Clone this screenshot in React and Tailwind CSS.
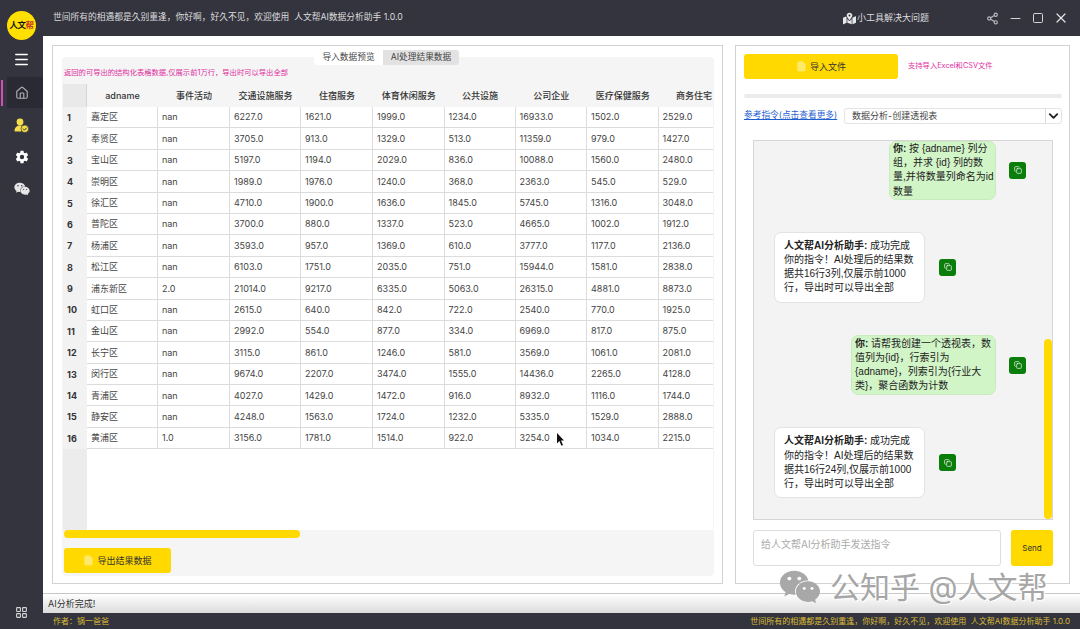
import React from "react";
import { Copy, File, LayoutGrid, ChevronDown, Minus, Square, X, Share2, Home, Menu } from "lucide-react";
import { FaMapMarkedAlt, FaWeixin } from "react-icons/fa";
import { IoSettingsSharp } from "react-icons/io5";

const FONT = "font-['Inter','Noto_Sans_CJK_SC',sans-serif]";
const CHAT_FONT = "font-['Liberation_Sans','Noto_Sans_CJK_SC',sans-serif]";

const COLS = [
  ["adname", "w-[71px]"],
  ["事件活动", "w-[72px]"],
  ["交通设施服务", "w-[71px]"],
  ["住宿服务", "w-[72px]"],
  ["体育休闲服务", "w-[71.5px]"],
  ["公共设施", "w-[71px]"],
  ["公司企业", "w-[71.5px]"],
  ["医疗保健服务", "w-[71.5px]"],
  ["商务住宅", "w-[71px]"],
];

const ROWS = [
  ["嘉定区", "nan", "6227.0", "1621.0", "1999.0", "1234.0", "16933.0", "1502.0", "2529.0"],
  ["奉贤区", "nan", "3705.0", "913.0", "1329.0", "513.0", "11359.0", "979.0", "1427.0"],
  ["宝山区", "nan", "5197.0", "1194.0", "2029.0", "836.0", "10088.0", "1560.0", "2480.0"],
  ["崇明区", "nan", "1989.0", "1976.0", "1240.0", "368.0", "2363.0", "545.0", "529.0"],
  ["徐汇区", "nan", "4710.0", "1900.0", "1636.0", "1845.0", "5745.0", "1316.0", "3048.0"],
  ["普陀区", "nan", "3700.0", "880.0", "1337.0", "523.0", "4665.0", "1002.0", "1912.0"],
  ["杨浦区", "nan", "3593.0", "957.0", "1369.0", "610.0", "3777.0", "1177.0", "2136.0"],
  ["松江区", "nan", "6103.0", "1751.0", "2035.0", "751.0", "15944.0", "1581.0", "2838.0"],
  ["浦东新区", "2.0", "21014.0", "9217.0", "6335.0", "5063.0", "26315.0", "4881.0", "8873.0"],
  ["虹口区", "nan", "2615.0", "640.0", "842.0", "722.0", "2540.0", "770.0", "1925.0"],
  ["金山区", "nan", "2992.0", "554.0", "877.0", "334.0", "6969.0", "817.0", "875.0"],
  ["长宁区", "nan", "3115.0", "861.0", "1246.0", "581.0", "3569.0", "1061.0", "2081.0"],
  ["闵行区", "nan", "9674.0", "2207.0", "3474.0", "1555.0", "14436.0", "2265.0", "4128.0"],
  ["青浦区", "nan", "4027.0", "1429.0", "1472.0", "916.0", "8932.0", "1116.0", "1744.0"],
  ["静安区", "nan", "4248.0", "1563.0", "1724.0", "1232.0", "5335.0", "1529.0", "2888.0"],
  ["黄浦区", "1.0", "3156.0", "1781.0", "1514.0", "922.0", "3254.0", "1034.0", "2215.0"],
];

const Sidebar = () => (
  <aside className="w-[43px] shrink-0 bg-[#34343f] flex flex-col items-center">
    <div className="mt-[11px] w-[29px] h-[29px] rounded-full bg-[#ffe000] flex items-center justify-center text-[8.5px] font-bold text-[#111] whitespace-nowrap tracking-[-0.5px]">
      人文<span className="text-[#c8352b]">帮</span>
    </div>
    <Menu size={17} strokeWidth={2.2} className="mt-[11px] text-white" />
    <div className="relative mt-[9px] w-full h-[31px]">
      <span className="absolute left-[1px] top-[3px] w-[2px] h-[26px] bg-[#d04fb0]" />
      <div className="ml-[7px] h-full bg-[#2a2a34] flex items-center justify-center pr-[6px]">
        <Home size={14} className="text-[#a9a9b0]" />
      </div>
    </div>
    <svg width="15" height="15" viewBox="0 0 15 15" className="mt-[10px]">
      <circle cx="6" cy="4" r="3.4" fill="#f5dc4a" />
      <path d="M0.5 13c0-3.8 2.4-5.6 5.5-5.6 2 0 3.6.7 4.6 2.1L7 13.6H1z" fill="#f5dc4a" />
      <circle cx="10.8" cy="10.8" r="3.8" fill="#f5dc4a" stroke="#34343f" strokeWidth="0.7" />
      <path d="M9 10.6l1.5 1.6 2-2.4" fill="none" stroke="#34343f" strokeWidth="1" />
    </svg>
    <IoSettingsSharp size={14} className="mt-[17px] text-white" />
    <FaWeixin size={16} className="mt-[17px] text-[#e6e6e6]" />
    <LayoutGrid size={13} strokeWidth={2} className="mt-auto mb-[10px] text-[#d5d5d5]" />
  </aside>
);

const WinBtn = ({ children }) => (
  <span className="w-[23px] flex items-center justify-center">{children}</span>
);

const TitleBar = () => (
  <header className="h-[36px] shrink-0 bg-[#34343f] flex items-center pl-[10px] pr-[7.5px] text-[#dcdcdc] text-[8.75px]">
    <span className="whitespace-pre">世间所有的相遇都是久别重逢，你好啊，好久不见，欢迎使用  人文帮AI数据分析助手 1.0.0</span>
    <div className="ml-auto flex items-center gap-[1px]">
      <FaMapMarkedAlt size={13} className="text-[#e8e8e8]" />
      <span className="text-[9px]">小工具解决大问题</span>
    </div>
    <div className="ml-[51.5px] flex">
      <WinBtn><Share2 size={13} className="text-[#bcbcc2]" /></WinBtn>
      <WinBtn><Minus size={15} strokeWidth={1.8} className="text-[#d5d5d5]" /></WinBtn>
      <WinBtn><Square size={12} strokeWidth={2} className="text-[#d5d5d5]" /></WinBtn>
      <WinBtn><X size={16} strokeWidth={1.8} className="text-[#e5e5e5]" /></WinBtn>
    </div>
  </header>
);

const YellowButton = ({ label, className }) => (
  <button className={`${className} h-[25px] shrink-0 rounded-[3px] bg-[#ffd900] flex items-center justify-center gap-[3px] text-[9px] text-[#333]`}>
    <File size={11} className="text-[#ffe96a]" fill="#ffe96a" />
    {label}
  </button>
);

const DataTable = () => (
  <div className="ml-px mr-px h-[446px] flex text-[9px] text-[#444] bg-white overflow-hidden">
    <div className="w-[24px] shrink-0 bg-[#ececec]">
      <div className="h-[23px] bg-[#e9e9e9] border-r border-[#d6d6d6]" />
      {ROWS.map((_, i) => (
        <div key={i} className="h-[21.4px] bg-[#f2f2f2] flex items-center pl-[4px] font-bold text-[#333]">{i + 1}</div>
      ))}
    </div>
    <div className="flex-1 min-w-0 overflow-hidden">
      <div className="h-[23px] flex bg-[#f5f5f5]">
        {COLS.map(([name, w]) => (
          <div key={name} className={`${w} shrink-0 flex items-center justify-center font-medium text-[#333] whitespace-nowrap`}>{name}</div>
        ))}
      </div>
      {ROWS.map((row) => (
        <div key={row[0]} className="h-[21.4px] flex">
          {row.map((v, i) => (
            <div key={i} className={`${COLS[i][1]} shrink-0 flex items-center pl-[4px] border-r border-b border-[#dcdcdc] whitespace-nowrap`}>{v}</div>
          ))}
        </div>
      ))}
    </div>
  </div>
);

const LeftPanel = () => (
  <section className="w-[671px] shrink-0 border border-[#d2d2d2] pt-[4px] pl-[9px] pr-[8px] flex flex-col">
    <div className="relative z-10 h-[15px] shrink-0 flex justify-center pr-[3px] text-[8.7px] text-[#444]">
      <div className="w-[69px] bg-white rounded-l-[3px] flex items-center justify-center">导入数据预览</div>
      <div className="w-[76px] bg-[#e2e2e2] rounded-r-[3px] flex items-center justify-center">AI处理结果数据</div>
    </div>
    <div className="mt-[-8px] h-[519px] bg-[#f5f5f5] rounded-[4px] flex flex-col">
      <p className="mt-[11px] ml-[2px] h-[10px] text-[7.3px] leading-[10px] text-[#e0309f]">返回的可导出的结构化表格数据,仅展示前1万行，导出时可以导出全部</p>
      <div className="mt-[6px]"><DataTable /></div>
      <div className="ml-[2px] w-[236px] h-[8px] rounded-full bg-[#ffd900]" />
      <YellowButton label="导出结果数据" className="mt-[10px] ml-[2px] w-[107px]" />
    </div>
  </section>
);

const CopyBtn = () => (
  <button className="w-[17px] h-[17px] shrink-0 rounded-[3px] bg-[#0a7d0a] flex items-center justify-center">
    <Copy size={8} className="text-white" />
  </button>
);

const UserMsg = ({ className, children }) => (
  <div className="flex justify-end items-center gap-[13px] pr-[26px]">
    <div className={`${className} pl-[3px] bg-[#d2f5c8] border border-[#c8ecbe] rounded-[7px] text-[10px] leading-[14.2px] text-[#222] whitespace-nowrap`}>
      {children}
    </div>
    <CopyBtn />
  </div>
);

const AiMsg = ({ children }) => (
  <div className="flex items-center gap-[14px] pl-[20px]">
    <div className="w-[151px] py-[6px] pl-[9px] bg-white border border-[#e3e3e3] rounded-[7px] text-[10px] leading-[14.2px] text-[#222] whitespace-nowrap">
      {children}
    </div>
    <CopyBtn />
  </div>
);

const Chat = () => (
  <div className={`${CHAT_FONT} relative mt-[16px] ml-[17px] mr-[16px] h-[380px] bg-[#f3f3f3] border border-[#d6d6d6] overflow-hidden flex flex-col gap-[32px]`}>
    <UserMsg className="w-[107px]">
      <b>你:</b> 按 {"{adname}"} 列分<br />组，并求 {"{id}"} 列的数<br />量,并将数量列命名为id<br />数量
    </UserMsg>
    <AiMsg>
      <b>人文帮AI分析助手:</b> 成功完成<br />你的指令！AI处理后的结果数<br />据共16行3列,仅展示前1000<br />行，导出时可以导出全部
    </AiMsg>
    <UserMsg className="w-[145px] py-px">
      <b>你:</b> 请帮我创建一个透视表，数<br />值列为{"{id}"}，行索引为<br />{"{adname}"}，列索引为{"{行业大"}<br />类}，聚合函数为计数
    </UserMsg>
    <AiMsg>
      <b>人文帮AI分析助手:</b> 成功完成<br />你的指令！AI处理后的结果数<br />据共16行24列,仅展示前1000<br />行，导出时可以导出全部
    </AiMsg>
    <span className="absolute right-0 bottom-0 w-[8px] h-[180px] rounded-full bg-[#ffd900]" />
  </div>
);

const RightPanel = () => (
  <section className="w-[335px] shrink-0 border border-[#d2d2d2] pt-[8px] flex flex-col">
    <div className="flex items-center pl-[8px]">
      <YellowButton label="导入文件" className="w-[154px]" />
      <span className="ml-[10px] text-[7.3px] text-[#e0309f]">支持导入Excel和CSV文件</span>
    </div>
    <div className="mt-[15px] ml-[8px] w-[318px] h-[4px] rounded-full bg-[#ececec]" />
    <div className="mt-[10px] ml-[8px] flex items-center">
      <a className="w-[100px] text-[8.7px] text-[#1f5fd0] underline whitespace-nowrap">参考指令(点击查看更多)</a>
      <div className="w-[218px] h-[16px] bg-white border border-[#e4e4e4] rounded-[3px] flex items-center text-[9px] text-[#444]">
        <span className="flex-1 pl-[7px]">数据分析-创建透视表</span>
        <span className="w-[16px] h-full border-l border-[#dcdcdc] flex items-center justify-center">
          <ChevronDown size={16} strokeWidth={3} className="text-[#222]" />
        </span>
      </div>
    </div>
    <Chat />
    <div className="mt-[10px] ml-[17px] mr-[16px] flex gap-[10px]">
      <div className="w-[248px] h-[36px] bg-white border border-[#dedede] rounded-[3px] pl-[7px] pt-[6px] text-[10px] text-[#aaa]">给人文帮AI分析助手发送指令</div>
      <button className="w-[42px] h-[36px] bg-[#ffd900] rounded-[3px] text-[8px] text-[#333]">Send</button>
    </div>
  </section>
);

export default function App() {
  return (
    <div className={`${FONT} relative w-[1080px] h-[629px] flex overflow-hidden bg-white`}>
      <Sidebar />
      <div className="flex-1 min-w-0 flex flex-col">
        <TitleBar />
        <main className="h-[557px] shrink-0 flex gap-[12px] pt-[9px] pb-[9px] pl-[9px]">
          <LeftPanel />
          <RightPanel />
        </main>
        <div className="h-[20px] shrink-0 border-t border-[#c8c8c8] bg-gradient-to-b from-white to-[#dcdcdc] pl-[5px] flex items-center text-[9px] text-[#333]">AI分析完成!</div>
        <footer className="flex-1 bg-[#34343f] flex items-center justify-between pl-[10px] pr-[10px] text-[8px] text-[#d9bb35]">
          <span>作者：锅一爸爸</span>
          <span className="whitespace-pre">世间所有的相遇都是久别重逢，你好啊，好久不见，欢迎使用  人文帮AI数据分析助手 1.0.0</span>
        </footer>
      </div>

      {/* mouse pointer */}
      <svg width="9" height="13" viewBox="0 0 9 13" className="absolute left-[556px] top-[433px]">
        <path d="M1 0l7 7.5H5l2 4.5-1.6.8L3.4 8 1 10.5z" fill="#111" />
      </svg>

      {/* watermark */}
      <div className="absolute left-[779px] top-[566px] flex items-center gap-[9px] text-[#a6a6a6] [text-shadow:1px_1px_0_#fff,-1px_0_0_#fff]">
        <FaWeixin size={42} className="text-[#a8a8a8]" />
        <span className="text-[30px] leading-[34px] whitespace-nowrap">公知乎 @人文帮</span>
      </div>
    </div>
  );
}
